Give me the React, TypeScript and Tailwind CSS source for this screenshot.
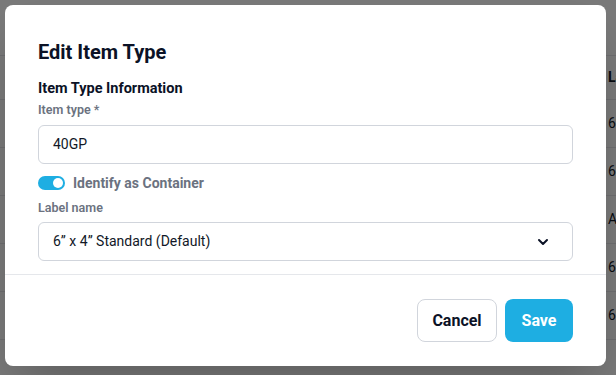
import { ChevronDown } from "lucide-react";

const rows = ["6” x 4” Standard", "6” x 4” Standard", "A4 Sheet", "6” x 4” Standard", "6” x 4” Standard"];

function BackgroundTable() {
  return (
    <div className="min-h-screen bg-white font-['Roboto',sans-serif] text-[14px] text-[#111827]">
      <div className="h-[56px] border-b border-gray-200" />
      <div className="grid grid-cols-[608px_1fr] h-[44px] items-center border-b border-gray-200 font-bold">
        <div />
        <div className="whitespace-nowrap">Label name</div>
      </div>
      {rows.map((r, i) => (
        <div key={i} className="grid grid-cols-[608px_1fr] h-[48px] items-center border-b border-gray-200">
          <div />
          <div className="whitespace-nowrap">{r}</div>
        </div>
      ))}
    </div>
  );
}

export default function App() {
  return (
    <div className="relative h-[375px] w-[616px] overflow-hidden">
      <BackgroundTable />
      <div className="absolute inset-0 bg-black/[0.52]">
        <div className="absolute left-[5px] top-[5px] w-[601px] rounded-lg bg-white shadow-2xl font-['Roboto',sans-serif]">
          <div className="px-[33px] pt-[33px] pb-[13px]">
            <h2 className="text-[20px] leading-[28px] font-bold text-[#0b1226]">Edit Item Type</h2>
            <h3 className="mt-[13px] text-[14.5px] leading-[20px] font-bold text-[#0b1226]">Item Type Information</h3>
            <label className="mt-[3px] block text-[12.5px] leading-[16px] font-semibold text-[#6b7280]">Item type *</label>
            <div className="mt-[7px] flex h-[39px] items-center rounded-md border border-gray-300 px-[14px] text-[14px] text-[#111827]">
              40GP
            </div>
            <div className="mt-[9px] flex h-[20px] items-center gap-2">
              <div className="flex h-[14px] w-[27px] items-center justify-end rounded-full bg-[#1eaee2] pr-[2px]">
                <div className="h-[10px] w-[10px] rounded-full bg-white" />
              </div>
              <span className="text-[14px] font-bold text-[#6b7280]">Identify as Container</span>
            </div>
            <label className="mt-[7px] block text-[12.5px] leading-[16px] font-semibold text-[#6b7280]">Label name</label>
            <div className="mt-[6px] flex h-[39px] items-center justify-between rounded-md border border-gray-300 pl-[14px] pr-[21px] text-[14px] text-[#111827]">
              <span>6” x 4” Standard (Default)</span>
              <ChevronDown className="h-4 w-4 text-[#0b1226]" strokeWidth={3} />
            </div>
          </div>
          <div className="border-t border-gray-200" />
          <div className="flex justify-end gap-2 px-[33px] py-6">
            <button className="h-[43px] w-[80px] rounded-lg border border-gray-300 bg-white text-[16px] font-bold text-[#0b1226]">
              Cancel
            </button>
            <button className="h-[43px] w-[68px] rounded-lg bg-[#1eaee2] text-[16px] font-bold text-white">
              Save
            </button>
          </div>
        </div>
      </div>
    </div>
  );
}
